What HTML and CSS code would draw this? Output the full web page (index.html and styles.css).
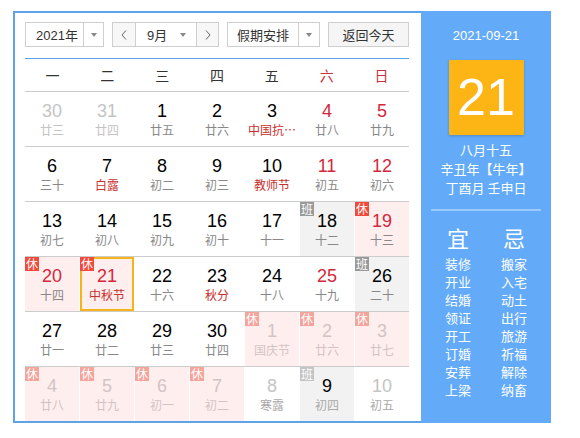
FILE: index.html
```html
<!DOCTYPE html>
<html lang="zh">
<head>
<meta charset="utf-8">
<link rel="stylesheet" href="styles.css">
</head>
<body>
<div class="cal">
  <div class="main">
    <div class="controls">
      <div class="sel sel-year"><span class="sel-text">2021年</span><span class="sel-arrow"><i class="tri"></i></span></div>
      <div class="sel sel-month">
        <span class="nav"><svg width="6" height="10" viewBox="0 0 6 10"><polyline points="5,0.5 1,5 5,9.5" fill="none" stroke="#666" stroke-width="1"/></svg></span>
        <span class="month-mid"><span class="month-text">9月</span><i class="tri"></i></span>
        <span class="nav nav-next"><svg width="6" height="10" viewBox="0 0 6 10"><polyline points="1,0.5 5,5 1,9.5" fill="none" stroke="#666" stroke-width="1"/></svg></span>
      </div>
      <div class="sel sel-hol"><span class="sel-text">假期安排</span><span class="sel-arrow"><i class="tri"></i></span></div>
      <div class="btn-today">返回今天</div>
    </div>
    <div class="week">
      <span>一</span><span>二</span><span>三</span><span>四</span><span>五</span><span class="we">六</span><span class="we">日</span>
    </div>
    <div class="grid">
      <div class="row">
        <div class="cell other"><b>30</b><em>廿三</em></div>
        <div class="cell other"><b>31</b><em>廿四</em></div>
        <div class="cell"><b>1</b><em>廿五</em></div>
        <div class="cell"><b>2</b><em>廿六</em></div>
        <div class="cell"><b>3</b><em class="fest">中国抗…</em></div>
        <div class="cell wkd"><b>4</b><em>廿八</em></div>
        <div class="cell wkd"><b>5</b><em>廿九</em></div>
      </div>
      <div class="row">
        <div class="cell"><b>6</b><em>三十</em></div>
        <div class="cell"><b>7</b><em class="fest">白露</em></div>
        <div class="cell"><b>8</b><em>初二</em></div>
        <div class="cell"><b>9</b><em>初三</em></div>
        <div class="cell"><b>10</b><em class="fest">教师节</em></div>
        <div class="cell wkd"><b>11</b><em>初五</em></div>
        <div class="cell wkd"><b>12</b><em>初六</em></div>
      </div>
      <div class="row">
        <div class="cell"><b>13</b><em>初七</em></div>
        <div class="cell"><b>14</b><em>初八</em></div>
        <div class="cell"><b>15</b><em>初九</em></div>
        <div class="cell"><b>16</b><em>初十</em></div>
        <div class="cell"><b>17</b><em>十一</em></div>
        <div class="cell work"><i class="badge">班</i><b>18</b><em>十二</em></div>
        <div class="cell rest wkd"><i class="badge">休</i><b>19</b><em>十三</em></div>
      </div>
      <div class="row">
        <div class="cell rest wkd"><i class="badge">休</i><b>20</b><em>十四</em></div>
        <div class="cell rest wkd today"><i class="badge">休</i><b>21</b><em class="fest">中秋节</em></div>
        <div class="cell"><b>22</b><em>十六</em></div>
        <div class="cell"><b>23</b><em class="fest">秋分</em></div>
        <div class="cell"><b>24</b><em>十八</em></div>
        <div class="cell wkd"><b>25</b><em>十九</em></div>
        <div class="cell work"><i class="badge">班</i><b>26</b><em>二十</em></div>
      </div>
      <div class="row">
        <div class="cell"><b>27</b><em>廿一</em></div>
        <div class="cell"><b>28</b><em>廿二</em></div>
        <div class="cell"><b>29</b><em>廿三</em></div>
        <div class="cell"><b>30</b><em>廿四</em></div>
        <div class="cell rest other"><i class="badge">休</i><b>1</b><em>国庆节</em></div>
        <div class="cell rest other"><i class="badge">休</i><b>2</b><em>廿六</em></div>
        <div class="cell rest other"><i class="badge">休</i><b>3</b><em>廿七</em></div>
      </div>
      <div class="row">
        <div class="cell rest other"><i class="badge">休</i><b>4</b><em>廿八</em></div>
        <div class="cell rest other"><i class="badge">休</i><b>5</b><em>廿九</em></div>
        <div class="cell rest other"><i class="badge">休</i><b>6</b><em>初一</em></div>
        <div class="cell rest other"><i class="badge">休</i><b>7</b><em>初二</em></div>
        <div class="cell other"><b>8</b><em class="dim">寒露</em></div>
        <div class="cell work other workday"><i class="badge">班</i><b>9</b><em class="dim">初四</em></div>
        <div class="cell other"><b>10</b><em class="dim">初五</em></div>
      </div>
    </div>
  </div>
  <div class="side">
    <div class="side-date">2021-09-21</div>
    <div class="big-day">21</div>
    <div class="lunar">
      <div>八月十五</div>
      <div>辛丑年【牛年】</div>
      <div>丁酉月 壬申日</div>
    </div>
    <div class="divider"></div>
    <div class="yiji">
      <div class="col">
        <div class="yj-title">宜</div>
        <div>装修</div><div>开业</div><div>结婚</div><div>领证</div><div>开工</div><div>订婚</div><div>安葬</div><div>上梁</div>
      </div>
      <div class="col">
        <div class="yj-title">忌</div>
        <div>搬家</div><div>入宅</div><div>动土</div><div>出行</div><div>旅游</div><div>祈福</div><div>解除</div><div>纳畜</div>
      </div>
    </div>
  </div>
</div>
</body>
</html>
```

FILE: styles.css
```css
* { box-sizing: border-box; }
body {
  margin: 0;
  background: #fff;
  font-family: "Liberation Sans", "Noto Sans CJK SC", sans-serif;
  color: #333;
}
.cal {
  margin: 11px 0 0 13px;
  width: 538px;
  border: 2px solid #5ea2ea;
  display: flex;
}
.main {
  width: 406px;
  padding: 9px 12px 0 10px;
}
.controls {
  display: flex;
  gap: 8px;
  height: 25px;
}
.sel, .btn-today {
  border: 1px solid #cfcfcf;
  height: 25px;
  display: flex;
  align-items: center;
  font-size: 13px;
  color: #333;
  background: #fff;
}
.sel-year { width: 79px; }
.sel-year .sel-text { width: 57px; padding-left: 10px; }
.sel-arrow {
  flex: 1;
  height: 100%;
  border-left: 1px solid #cfcfcf;
  display: flex;
  align-items: center;
  justify-content: center;
}
.tri {
  display: block;
  width: 0;
  height: 0;
  border-left: 3.5px solid transparent;
  border-right: 3.5px solid transparent;
  border-top: 4px solid #888;
}
.sel-month { width: 107px; }
.nav {
  width: 22px;
  height: 100%;
  background: #f7f7f7;
  display: flex;
  align-items: center;
  justify-content: center;
  flex: none;
}
.nav-next { border-left: 1px solid #cfcfcf; }
.month-mid {
  flex: 1;
  height: 100%;
  border-left: 1px solid #cfcfcf;
  display: flex;
  align-items: center;
  padding-left: 11px;
  padding-right: 10px;
  justify-content: space-between;
}
.sel-hol { width: 93px; }
.sel-hol .sel-text { width: 70px; padding-left: 9px; }
.btn-today {
  width: 81px;
  justify-content: center;
  background: #f5f5f5;
}
.week {
  margin-top: 11px;
  border-top: 1px solid #5ea2ea;
  border-bottom: 1px solid #cccccc;
  height: 34px;
  display: grid;
  grid-template-columns: repeat(7, 1fr);
  align-items: center;
  font-family: "Noto Sans CJK SC", sans-serif;
  font-size: 14px;
  color: #333;
  text-align: center;
}
.week .we { color: #c8303a; }
.row {
  display: grid;
  grid-template-columns: repeat(7, 1fr);
  column-gap: 1px;
  height: 55px;
  border-top: 1px solid #cccccc;
}
.row:first-child { border-top: none; height: 54px; }
.cell {
  position: relative;
  display: flex;
  flex-direction: column;
  align-items: center;
  padding-top: 9px;
}
.cell b {
  font-weight: normal;
  font-size: 18px;
  line-height: 20px;
  color: #000;
}
.cell em {
  font-style: normal;
  font-family: "Noto Sans CJK SC", sans-serif;
  font-size: 12px;
  line-height: 18px;
  color: #888;
  white-space: nowrap;
}
.cell.wkd b { color: #d4273b; }
.cell em.fest { color: #c9302c; }
.cell.rest { background: #ffeeee; }
.cell.work { background: #f2f2f2; }
.badge {
  position: absolute;
  left: 0;
  top: 0;
  width: 14px;
  height: 14px;
  font-style: normal;
  font-family: "Noto Sans CJK SC", sans-serif;
  font-size: 12px;
  line-height: 14px;
  color: #fff;
  text-align: center;
  z-index: 2;
}
.rest .badge { background: #f2493b; }
.work .badge { background: #999999; }
.cell.other b, .cell.other.wkd b { color: #c4c4c4; }
.cell.other em { color: #c4c4c4; }
.cell.other em.dim { color: #aaaaaa; }
.cell.rest.other b, .cell.rest.other em { color: #d2c4c4; }
.rest.other .badge { background: #f5a49c; }
.work.other .badge { background: #c4c4c4; }
.cell.workday b { color: #000; }
.today { box-shadow: inset 0 0 0 2px #f6b41a; }
.side {
  width: 130px;
  margin-right: -2px;
  margin-top: -2px;
  margin-bottom: -2px;
  background: #63aaf8;
  color: #fff;
  display: flex;
  flex-direction: column;
  align-items: center;
  padding-top: 16px;
}
.side-date {
  font-size: 13px;
  line-height: 18px;
}
.big-day {
  margin-top: 15px;
  width: 75px;
  height: 75px;
  background: #fdb515;
  box-shadow: 0 1px 3px rgba(0, 0, 0, 0.2);
  font-size: 52px;
  line-height: 75px;
  text-align: center;
  border-radius: 1px;
}
.lunar {
  margin-top: 5px;
  font-family: "Noto Sans CJK SC", sans-serif;
  font-size: 13px;
  line-height: 19px;
  text-align: center;
}
.divider {
  margin-top: 12px;
  width: 110px;
  height: 2px;
  background: #9ccaf9;
}
.yiji {
  margin-top: 13px;
  display: grid;
  grid-template-columns: 56px 56px;
  font-family: "Noto Sans CJK SC", sans-serif;
  font-size: 13px;
  line-height: 18px;
  text-align: center;
}
.yj-title {
  font-size: 22px;
  line-height: 26px;
  margin-bottom: 5px;
}
```
